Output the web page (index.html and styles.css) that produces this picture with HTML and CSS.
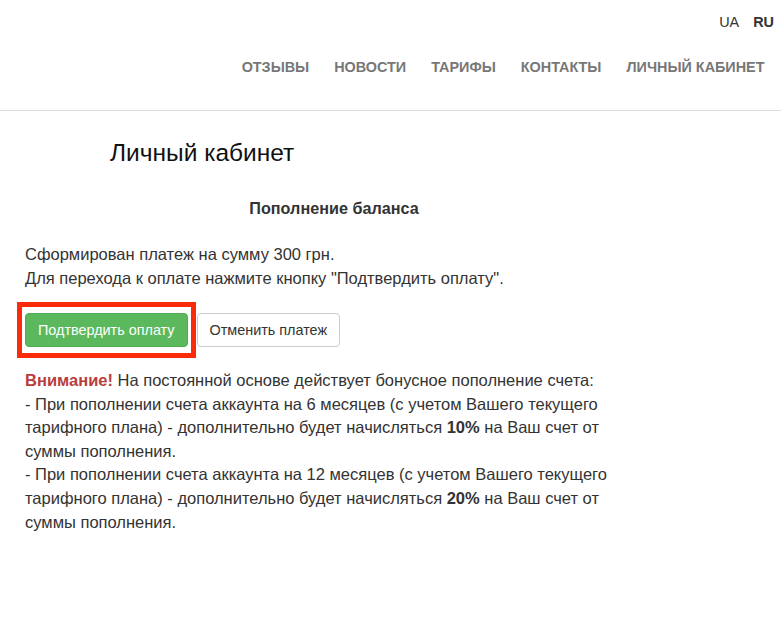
FILE: index.html
```html
<!DOCTYPE html>
<html lang="ru">
<head>
<meta charset="utf-8">
<title>Личный кабинет</title>
<link rel="stylesheet" href="styles.css">
</head>
<body>
<header class="header">
  <div class="langs">
    <a class="lang" href="#">UA</a>
    <a class="lang lang-active" href="#">RU</a>
  </div>
  <nav class="nav">
    <a class="nav-link" href="#">Отзывы</a>
    <a class="nav-link" href="#">Новости</a>
    <a class="nav-link" href="#">Тарифы</a>
    <a class="nav-link" href="#">Контакты</a>
    <a class="nav-link" href="#">Личный кабинет</a>
  </nav>
</header>
<main class="main">
  <h1 class="title">Личный кабинет</h1>
  <div class="content">
    <h2 class="subtitle">Пополнение баланса</h2>
    <p class="info">Сформирован платеж на сумму 300 грн.<br>Для перехода к оплате нажмите кнопку "Подтвердить оплату".</p>
    <div class="actions">
      <span class="highlight"></span>
      <button class="btn btn-success" type="button">Подтвердить оплату</button>
      <button class="btn btn-default" type="button">Отменить платеж</button>
    </div>
    <p class="notice"><span class="attention">Внимание!</span> На постоянной основе действует бонусное пополнение счета:<br>- При пополнении счета аккаунта на 6 месяцев (с учетом Вашего текущего тарифного плана) - дополнительно будет начисляться <b>10%</b> на Ваш счет от суммы пополнения.<br>- При пополнении счета аккаунта на 12 месяцев (с учетом Вашего текущего тарифного плана) - дополнительно будет начисляться <b>20%</b> на Ваш счет от суммы пополнения.</p>
  </div>
</main>
</body>
</html>
```
FILE: styles.css
```css
* { box-sizing: border-box; }
html, body { margin: 0; padding: 0; }
body {
  font-family: "Liberation Sans", Arial, Helvetica, sans-serif;
  font-size: 16.5px;
  line-height: 24px;
  color: #333;
  background: #fff;
}
a { text-decoration: none; }
.header {
  border-bottom: 1px solid #dcdcdc;
  padding-bottom: 33px;
}
.langs {
  display: flex;
  justify-content: flex-end;
  gap: 14px;
  padding: 11px 7px 0 0;
  font-size: 14.4px;
  line-height: 22px;
}
.lang { color: #333; }
.lang-active { font-weight: bold; }
.nav {
  display: flex;
  justify-content: flex-end;
  padding: 24px 4px 0 0;
}
.nav-link {
  color: #777;
  font-size: 14.4px;
  font-weight: bold;
  line-height: 20px;
  text-transform: uppercase;
  padding: 0 12.5px;
}
.main {
  padding: 26px 25px 0 25px;
}
.title {
  margin: 0 0 0 85px;
  font-size: 24.5px;
  font-weight: normal;
  line-height: 32px;
  color: #111;
}
.content {
  width: 618px;
}
.subtitle {
  margin: 27px 0 22px;
  font-size: 16.2px;
  font-weight: bold;
  text-align: center;
  line-height: 24px;
}
.info {
  margin: 0 0 23px;
}
.actions {
  position: relative;
  display: flex;
  gap: 9px;
  margin-bottom: 22px;
}
.highlight {
  position: absolute;
  left: -8px;
  top: -11px;
  width: 179px;
  height: 56px;
  border: 5px solid #fb2a0b;
  pointer-events: none;
}
.btn {
  font-family: inherit;
  font-size: 14.4px;
  line-height: 20px;
  padding: 6px 12px;
  border-radius: 4px;
  border: 1px solid transparent;
  cursor: pointer;
  height: 34px;
}
.btn-success {
  background: #5cb85c;
  border-color: #4cae4c;
  color: #fff;
}
.btn-default {
  background: #fff;
  border-color: #ccc;
  color: #333;
}
.notice {
  margin: 0;
  line-height: 23.6px;
}
.attention {
  color: #b93d3d;
  font-weight: bold;
}
```
